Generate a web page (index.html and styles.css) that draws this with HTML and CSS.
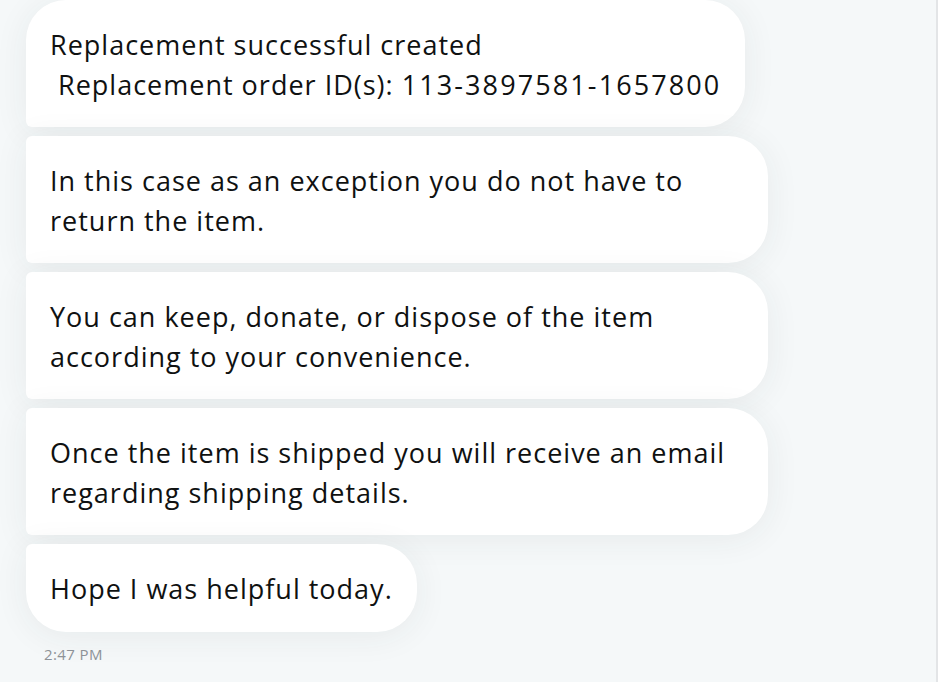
FILE: index.html
```html
<!DOCTYPE html>
<html lang="en">
<head>
<meta charset="utf-8">
<title>Chat</title>
<link rel="stylesheet" href="styles.css">
</head>
<body>
<div class="pane">
  <div class="thread">
    <div class="bubble first">Replacement successful created<br>&nbsp;Replacement order ID(s): <span class="order-id">113-3897581-1657800</span></div>
    <div class="bubble">In this case as an exception you do not have to return the item.</div>
    <div class="bubble">You can keep, donate, or dispose of the item according to your convenience.</div>
    <div class="bubble">Once the item is shipped you will receive an email regarding shipping details.</div>
    <div class="bubble last">Hope I was helpful today.</div>
    <div class="time">2:47 PM</div>
  </div>
</div>
</body>
</html>
```
FILE: styles.css
```css
html, body {
  margin: 0;
  padding: 0;
  background: #ffffff;
}
body {
  width: 940px;
  height: 682px;
  overflow: hidden;
}
.pane {
  width: 936px;
  height: 682px;
  background: #f5f8f9;
  border-right: 2px solid #e3e5e7;
  overflow: hidden;
}
.thread {
  display: flex;
  flex-direction: column;
  align-items: flex-start;
  gap: 9px;
  padding: 0 0 0 26px;
}
.bubble {
  box-sizing: border-box;
  max-width: 742px;
  background: #ffffff;
  color: #0f1111;
  font-family: "Open Sans", "Noto Sans", sans-serif;
  font-size: 27px;
  line-height: 39.5px;
  letter-spacing: 1px;
  padding: 25px 24px 23px;
  border-radius: 6px 40px 40px 6px;
  box-shadow: 0 4px 34px rgba(40, 50, 60, 0.07);
}
.bubble.first {
  border-radius: 40px 40px 40px 6px;
}
.bubble.last {
  border-radius: 6px 40px 40px 40px;
}
.order-id {
  letter-spacing: 2.1px;
}
.time {
  margin: 3px 0 0 18px;
  font-family: "Open Sans", "Noto Sans", sans-serif;
  font-size: 15px;
  letter-spacing: 0.4px;
  color: #8d9297;
}
```
